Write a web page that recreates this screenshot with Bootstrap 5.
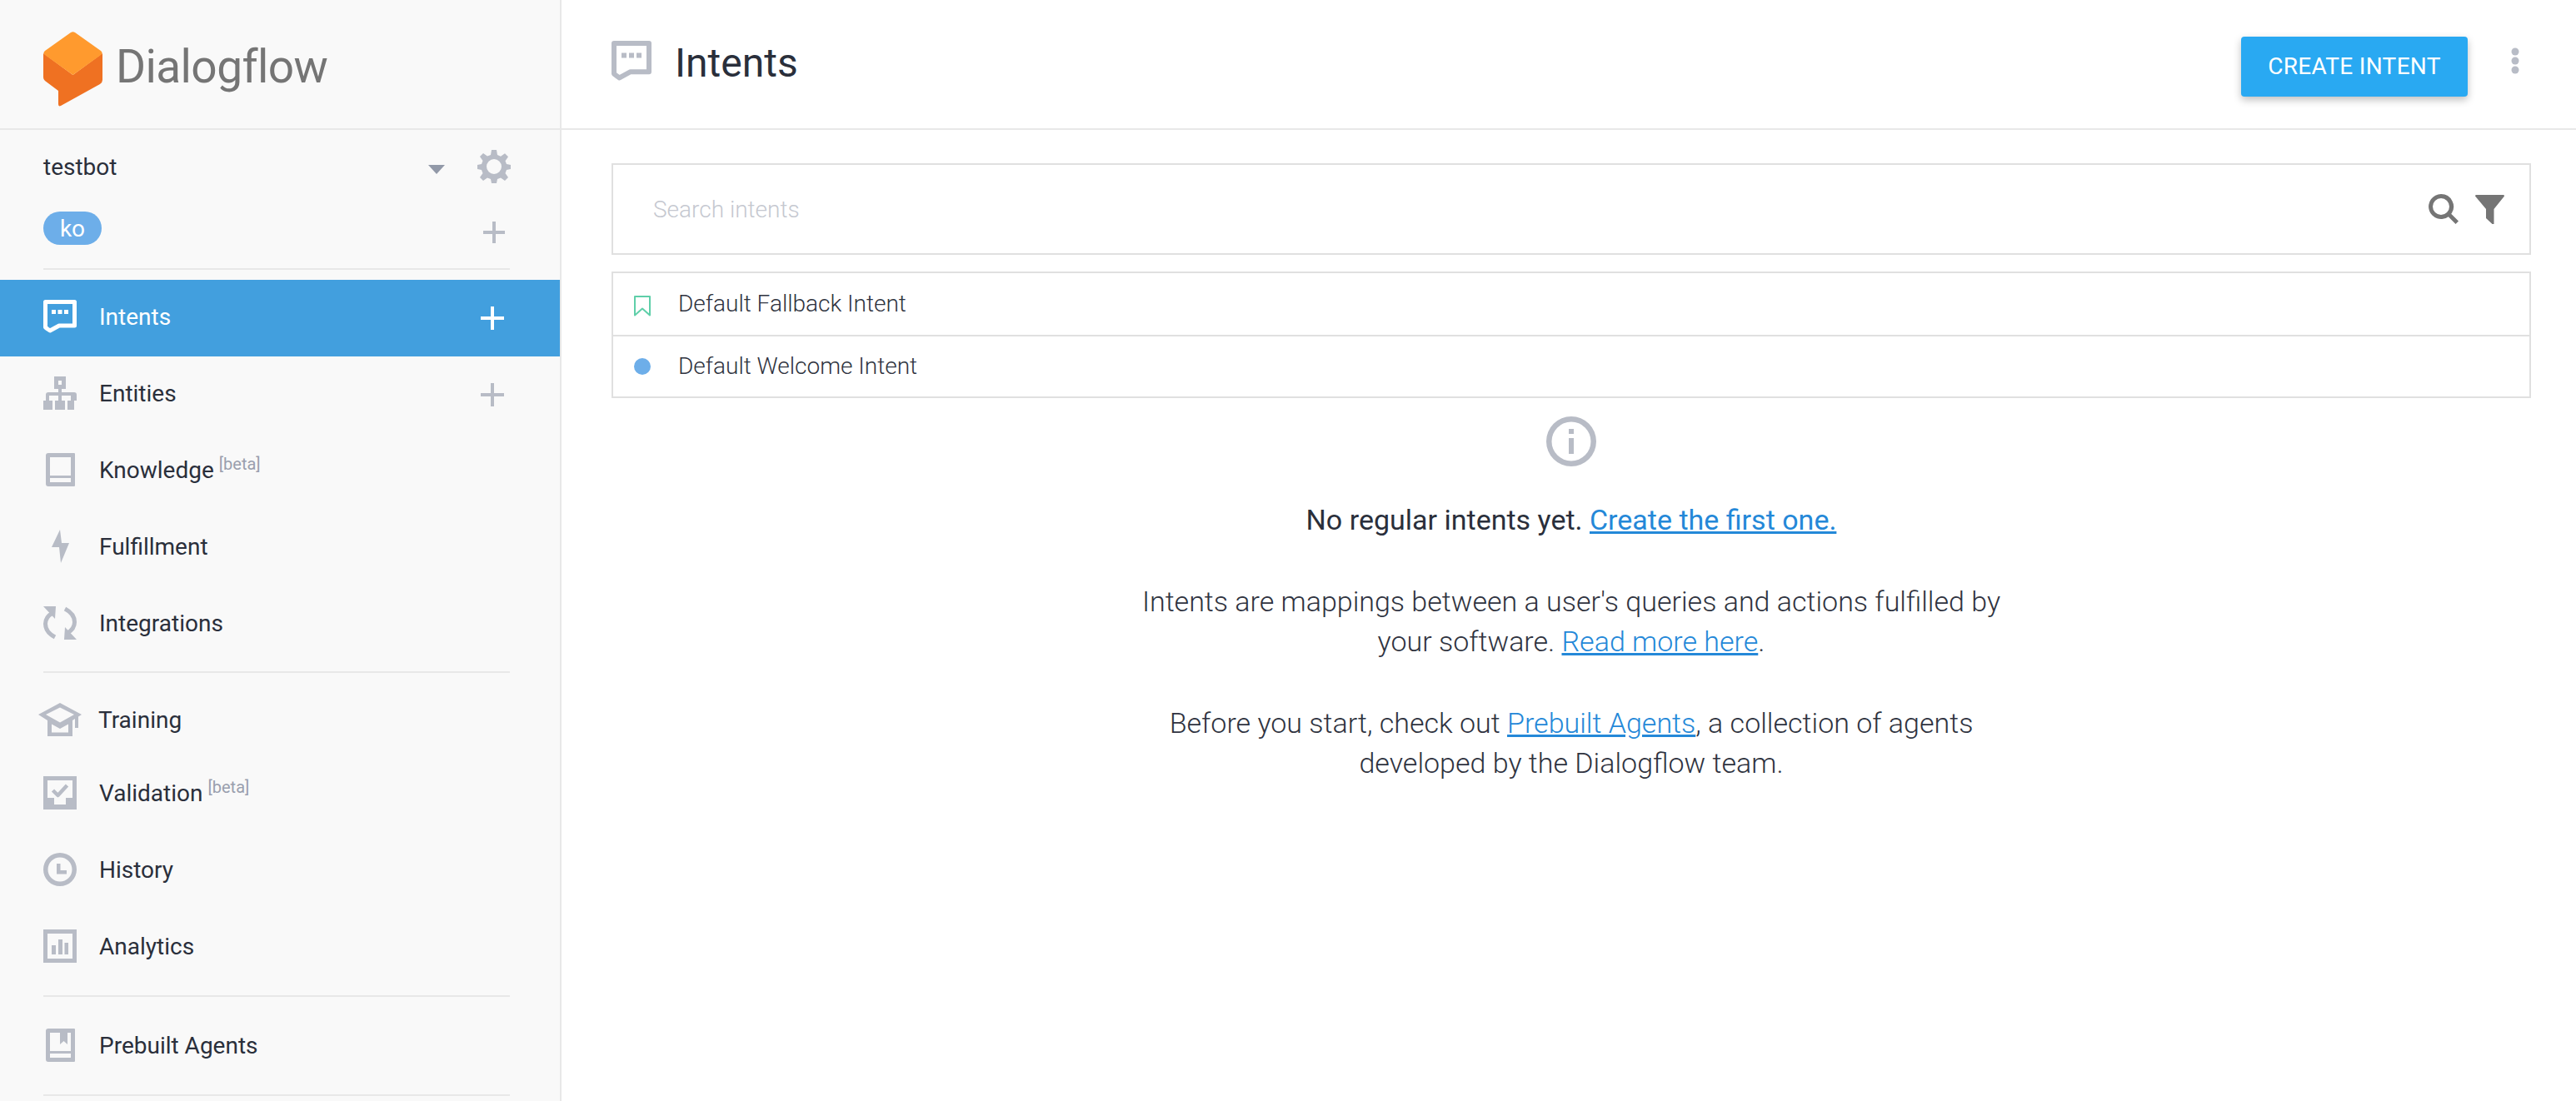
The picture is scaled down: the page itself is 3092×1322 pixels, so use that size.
<!DOCTYPE html>
<html lang="en">
<head>
<meta charset="utf-8">
<title>Dialogflow - Intents</title>
<link href="https://cdn.jsdelivr.net/npm/bootstrap@5.3.0/dist/css/bootstrap.min.css" rel="stylesheet">
<style>
html,body{height:100%;overflow:hidden}
body{font-family:Roboto,"Liberation Sans",sans-serif;color:#2a2f3b;background:#fff;font-size:28px}
.df-shell{height:1322px}
.df-side{width:674px;flex:none;background:#f9f9f9;border-right:2px solid #e8e8e8;overflow:hidden}
.df-ico{fill:#b8bcc6;flex:none;display:block}
.df-line{fill:none;stroke:#b8bcc6;stroke-linejoin:round}
.df-brand{height:156px;padding:38px 0 0 52px;border-bottom:2px solid #e8e8e8;gap:16px}
.df-brand-name{font-size:55px;line-height:72px;color:#757575;letter-spacing:-.6px;margin-top:6px}
.df-project{height:88px;padding:0 59px 0 52px;line-height:1}
.df-bot{padding-top:2px}
.df-caret{width:0;height:0;border-left:10px solid transparent;border-right:10px solid transparent;border-top:11px solid #9299a8;margin:6px 39px 0 auto}
.df-lang{height:78px;padding:10px 66px 0 52px}
.df-chip{width:70px;height:40px;border-radius:20px;background:#6daee9;color:#fff;line-height:41px;text-align:center}
.df-lang-plus{margin-top:12px}
.df-rule{height:2px;margin:0 60px 0 52px;background:#e8e8e8;opacity:1;border:0}
.df-rule-a{margin-top:10px}
.df-rule-b{margin-top:11px}
.df-rule-c{margin-top:11px}
.df-nav{margin-top:12px}
.df-nav-2{margin-top:16px}
.df-nav-3{margin-top:14px}
.df-link{height:92px;padding:0 67px 4px 52px;color:#2a2f3b;gap:27px;font-size:28px}
.df-link:hover{color:#2a2f3b}
.df-link>span{padding-top:2px}
.df-link.active,.df-link.active:hover{background:#429fde;color:#fff}
.df-link.active .df-ico{fill:#fff}
.df-link.active .df-line{stroke:#fff}
.df-link.df-short{height:84px}
.df-cap{margin-left:-6px;margin-right:-7px}
.df-plus{margin-top:4px;margin-left:auto}
.df-beta{font-size:20px;color:#9a9fae;position:relative;top:-10px;margin-left:6px}
.df-top{height:156px;border-bottom:2px solid #e8e8e8;padding:0 68px 0 60px;gap:28px}
.df-top-ico{margin-top:-8px}
.df-title{font-size:48px;font-weight:400;margin:-3px 0 0;color:#2a2f3b;line-height:1}
.df-create{width:272px;height:72px;background:#29a9f2;color:#fff;font-size:28px;letter-spacing:.3px;border:0;border-radius:4px;box-shadow:0 4px 10px rgba(0,0,0,.25);padding:0;margin:6px 0 0 auto}
.df-create:hover{background:#29a9f2;color:#fff}
.df-more{margin:-8px 0 0 24px}
.df-body{padding:40px 54px 0 60px}
.df-search{height:110px;border:2px solid #e0e0e0;padding:0 30px 0 48px;gap:20px}
.df-search-input{flex:1;border:0;outline:0;padding:2px 0 0;background:none;font-size:28px;font-weight:300;color:#2a2f3b;min-width:0;box-shadow:none}
.df-search-input::placeholder{color:#c5c8d0;opacity:1}
.df-tools{fill:#757575;flex:none}
.df-list{margin-top:20px;border:2px solid #e0e0e0;border-radius:0}
.df-item{height:74px;padding:0 0 1px 25px;gap:33px;border:0;border-radius:0;font-size:28px;font-weight:300;color:#2f3340;background:none}
.df-item+.df-item{border-top:2px solid #e0e0e0;height:74px}
.df-mark{margin-top:5px;flex:none}
.df-dot{width:20px;height:20px;border-radius:50%;background:#6daee9;flex:none}
.df-empty{font-size:34px;line-height:48px;font-weight:300;text-align:center;width:1100px;margin:22px auto 0;color:#2f3340}
.df-empty a{color:#2488d8}
.df-empty p{margin:0 0 50px}
.df-empty .df-lead{font-weight:400;color:#2a2f3b;margin-top:40px}
.df-empty .df-lead a{font-weight:400}
.df-info{margin:0 auto}
</style>
</head>
<body>
<div class="d-flex df-shell">
  <aside class="df-side d-flex flex-column">
    <div class="df-brand d-flex align-items-start">
      <svg width="71" height="90" viewBox="0 0 71 90"><path fill="#ef7122" d="M0 26 35.5 52 71 26V58q0 3-3 5L21 89q-3 1.500-3-2V71L2 59q-2-1.500-2-4Z"/><path fill="#ff9a2e" d="M33 1q2.500-1.500 5 0L69 23q3 2.500 0 5L35.500 52 2 28q-3-2.500 0-5Z"/></svg>
      <span class="df-brand-name">Dialogflow</span>
    </div>
    <div class="df-project d-flex align-items-center">
      <span class="df-bot">testbot</span>
      <span class="df-caret"></span>
      <svg class="df-ico" width="40" height="40" viewBox="0 0 40 40"><path d="M17 0h6l1 6 4 1.700 5-3.500 4 4-3.500 5L35 17l5 1v5l-5 1-1.500 4 3.500 5-4 4-5-3.500L24 35l-1 5h-6l-1-5-4-1.500L7 37l-4-4 3.500-5L5 24l-5-1v-5l5-1 1.500-4L3 8l4-4 5 3.500L16 6Zm3 11a9 9 0 1 0 0 18 9 9 0 0 0 0-18Z" fill-rule="evenodd"/></svg>
    </div>
    <div class="df-lang d-flex align-items-start justify-content-between">
      <span class="df-chip">ko</span>
      <svg class="df-ico df-lang-plus" width="26" height="26" viewBox="0 0 26 26"><path d="M11 0h4v11h11v4H15v11h-4V15H0v-4h11Z"/></svg>
    </div>
    <hr class="df-rule">
    <nav class="nav flex-column df-nav">
      <a class="nav-link df-link active d-flex align-items-center" href="#">
        <svg class="df-ico" width="40" height="40" viewBox="0 0 40 40"><path class="df-line" stroke-width="5" d="M2.500 2.500h35V31H19L8 37l-3-2-2.500-2Z"/><path d="M10 12h5v5h-5zM17.500 12h5v5h-5zM25 12h5v5h-5z"/></svg>
        <span>Intents</span>
        <svg class="df-ico df-plus" width="28" height="28" viewBox="0 0 28 28"><path d="M12 0h4v12h12v4H16v12h-4V16H0v-4h12Z"/></svg>
      </a>
      <a class="nav-link df-link d-flex align-items-center" href="#">
        <svg class="df-ico" width="40" height="40" viewBox="0 0 40 40"><path fill-rule="evenodd" d="M13 0h14v15h-5v4h15q3 0 3 3v7h-3v11h-8V29h4v-6H22v6h4v11h-12V29h4v-6H7v6h4v11H0V29h3v-7q0-3 3-3h12v-4h-5Zm5 5v5h4V5Z"/></svg>
        <span>Entities</span>
        <svg class="df-ico df-plus" width="28" height="28" viewBox="0 0 28 28"><path d="M12 0h4v12h12v4H16v12h-4V16H0v-4h12Z"/></svg>
      </a>
      <a class="nav-link df-link d-flex align-items-center" href="#">
        <svg class="df-ico" width="40" height="40" viewBox="0 0 40 40"><path fill-rule="evenodd" d="M6 0h31q1 0 1 1v38q0 1-1 1H6q-3 0-3-3V3q0-3 3-3Zm2 5v22h25V5Zm0 25v5h25v-5Z"/></svg>
        <span>Knowledge<span class="df-beta">[beta]</span></span>
      </a>
      <a class="nav-link df-link d-flex align-items-center" href="#">
        <svg class="df-ico" width="40" height="40" viewBox="0 0 40 40"><path d="M20 0 10 21h9l2 19 10-24h-9Z"/></svg>
        <span>Fulfillment</span>
      </a>
      <a class="nav-link df-link d-flex align-items-center" href="#">
        <svg class="df-ico" width="40" height="40" viewBox="0 0 40 40"><path class="df-line" stroke-width="5" d="M11 8Q2.500 13 2.500 21 2.500 31 14 37"/><path class="df-line" stroke-width="5" d="M29 32Q37.500 27 37.500 19 37.500 9 26 3"/><path d="M0 0h15l-1 15ZM40 40H25l1-15Z"/></svg>
        <span>Integrations</span>
      </a>
    </nav>
    <hr class="df-rule df-rule-a">
    <nav class="nav flex-column df-nav-2">
      <a class="nav-link df-link df-short d-flex align-items-center" href="#">
        <svg class="df-ico df-cap" width="52" height="40" viewBox="0 0 52 40"><path fill-rule="evenodd" d="M26 0 52 14l-4 2.500V30h-4V19L41 21v19H11V21L0 14Zm0 5.500L9 14l17 9.500L43 14Zm-10 20v10h20v-10l-10 5.500Z"/></svg>
        <span>Training</span>
      </a>
      <a class="nav-link df-link d-flex align-items-center" href="#">
        <svg class="df-ico" width="40" height="40" viewBox="0 0 40 40"><path fill-rule="evenodd" d="M0 0h40v40H0Zm5 5v21h8v8h14v-8h8V5Z"/><path class="df-line" stroke-width="4.500" d="m11.500 17 6 6 11-12"/></svg>
        <span>Validation<span class="df-beta">[beta]</span></span>
      </a>
      <a class="nav-link df-link d-flex align-items-center" href="#">
        <svg class="df-ico" width="40" height="40" viewBox="0 0 40 40"><path fill-rule="evenodd" d="M20 0a20 20 0 1 1 0 40 20 20 0 0 1 0-40Zm0 5.500a14.500 14.500 0 1 0 0 29 14.500 14.500 0 0 0 0-29Z"/><path d="M16 13h4.500v8H28v4.500H16Z"/></svg>
        <span>History</span>
      </a>
      <a class="nav-link df-link d-flex align-items-center" href="#">
        <svg class="df-ico" width="40" height="40" viewBox="0 0 40 40"><path fill-rule="evenodd" d="M0 0h40v40H0Zm5 5v30h30V5Z"/><path d="M10 19h5v11h-5zM18 12h5v18h-5zM25.500 16h4.500v14h-4.500z"/></svg>
        <span>Analytics</span>
      </a>
    </nav>
    <hr class="df-rule df-rule-b">
    <nav class="nav flex-column df-nav-3">
      <a class="nav-link df-link d-flex align-items-center" href="#">
        <svg class="df-ico" width="40" height="40" viewBox="0 0 40 40"><path fill-rule="evenodd" d="M6 0h31q1 0 1 1v38q0 1-1 1H6q-3 0-3-3V3q0-3 3-3Zm2 5v22h25V5h-4v14l-4.500-4-4.500 4V5Zm0 25v5h25v-5Z"/></svg>
        <span>Prebuilt Agents</span>
      </a>
    </nav>
    <hr class="df-rule df-rule-c">
  </aside>
  <main class="flex-grow-1 d-flex flex-column">
    <header class="df-top d-flex align-items-center">
      <svg class="df-ico df-top-ico" width="48" height="48" viewBox="0 0 40 40"><path class="df-line" stroke-width="5" d="M2.500 2.500h35V31H19L8 37l-3-2-2.500-2Z"/><path d="M10 12h5v5h-5zM17.500 12h5v5h-5zM25 12h5v5h-5z"/></svg>
      <h1 class="df-title">Intents</h1>
      <button class="btn df-create" type="button">CREATE INTENT</button>
      <svg class="df-ico df-more" width="10" height="32" viewBox="0 0 10 32"><circle cx="5" cy="5" r="4.500"/><circle cx="5" cy="16" r="4.500"/><circle cx="5" cy="27" r="4.500"/></svg>
    </header>
    <section class="df-body">
      <div class="df-search d-flex align-items-center">
        <input class="df-search-input" type="text" placeholder="Search intents" aria-label="Search intents">
        <svg class="df-tools" width="36" height="36" viewBox="0 0 36 36"><path fill-rule="evenodd" d="M15 0a15 15 0 0 1 12.200 23.800L36 32.500 32.500 36l-8.700-8.800A15 15 0 1 1 15 0Zm0 5a10 10 0 1 0 0 20 10 10 0 0 0 0-20Z"/></svg>
        <svg class="df-tools" width="35" height="35" viewBox="0 0 35 35"><path d="M1 0h33q1 0 1 1.500L22.500 17v18l-2 0L13 28V17L0 1.500Q0 0 1 0Z"/></svg>
      </div>
      <div class="list-group df-list">
        <div class="list-group-item df-item d-flex align-items-center">
          <svg class="df-mark" width="20" height="25" viewBox="0 0 20 25"><path fill="none" stroke="#5fcfa9" stroke-width="2" stroke-linejoin="round" d="M1 1h18v22.500l-9-8-9 8Z"/></svg>
          <span>Default Fallback Intent</span>
        </div>
        <div class="list-group-item df-item d-flex align-items-center">
          <span class="df-dot"></span>
          <span>Default Welcome Intent</span>
        </div>
      </div>
      <div class="df-empty">
        <svg class="df-info df-ico" width="60" height="60" viewBox="0 0 60 60"><path fill-rule="evenodd" d="M30 0a30 30 0 1 1 0 60 30 30 0 0 1 0-60Zm0 6.500a23.500 23.500 0 1 0 0 47 23.500 23.500 0 0 0 0-47Z"/><path d="M27 15h6v6h-6zM27 26h6v19h-6z"/></svg>
        <p class="df-lead">No regular intents yet. <a href="#">Create the first one.</a></p>
        <p>Intents are mappings between a user's queries and actions fulfilled by<br>your software. <a href="#">Read more here</a>.</p>
        <p>Before you start, check out <a href="#">Prebuilt Agents</a>, a collection of agents<br>developed by the Dialogflow team.</p>
      </div>
    </section>
  </main>
</div>
<script src="https://cdn.jsdelivr.net/npm/bootstrap@5.3.0/dist/js/bootstrap.bundle.min.js"></script>
</body>
</html>
